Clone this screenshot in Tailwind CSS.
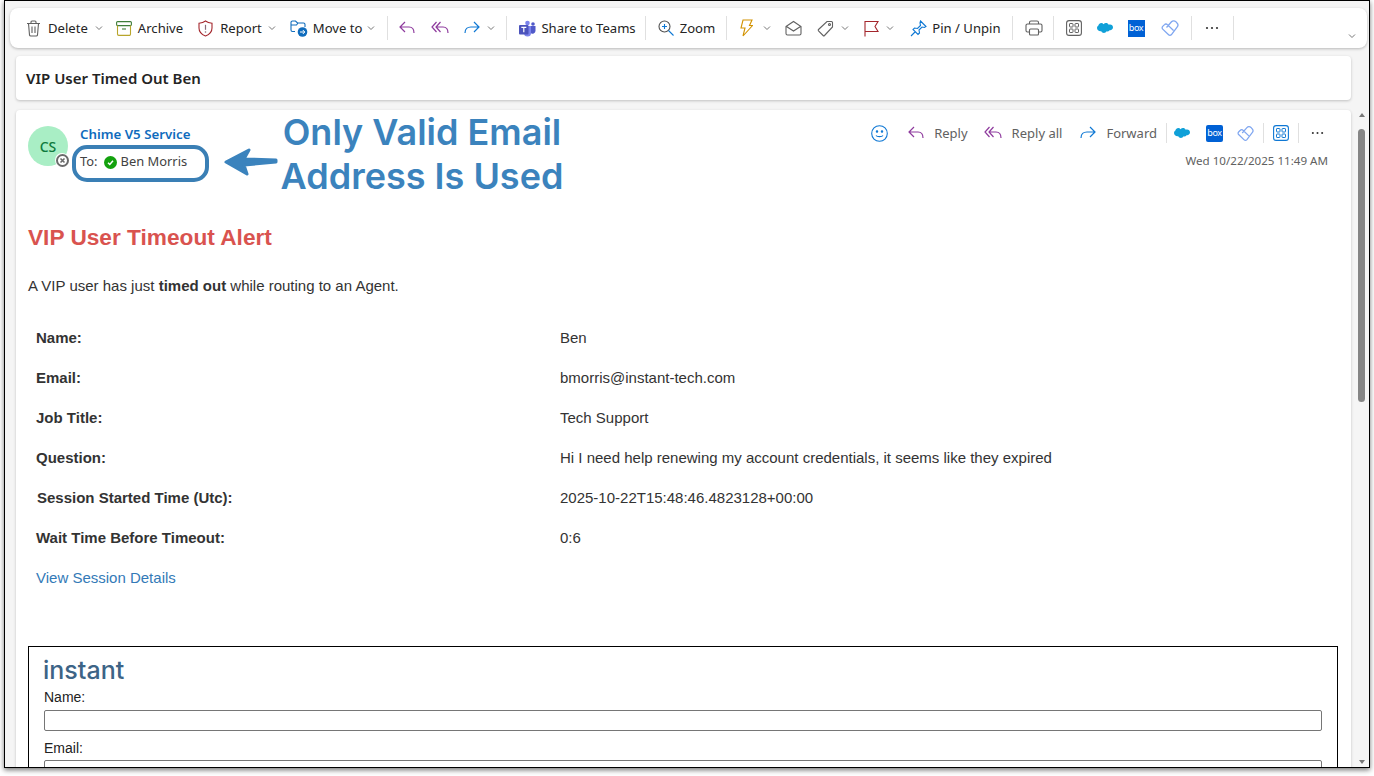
<!DOCTYPE html>
<html lang="en">
<head>
    <meta charset="UTF-8">
    <title>VIP User Timed Out Ben</title>
    <script src="https://cdn.jsdelivr.net/npm/@tailwindcss/browser@4"></script>
</head>
<body class="bg-white h-[776px] overflow-hidden font-['Noto_Sans',sans-serif]">
    <svg class="hidden">
        <symbol id="chev" viewBox="0 0 8 8"><path d="M1 2.5 4 5.5 7 2.5" fill="none" stroke="#777" stroke-width="1"/></symbol>
        <symbol id="reply" viewBox="0 0 18 16"><path d="M7 2 2 7l5 5M2 7h9c3 0 5 2 5 6" fill="none" stroke="currentColor" stroke-width="1.2"/></symbol>
        <symbol id="replyall" viewBox="0 0 18 16"><path d="M5.5 2 1 7l4.5 5M9.5 2 5 7l4.500 5M5 7h7c3 0 5 2 5 6" fill="none" stroke="currentColor" stroke-width="1.2"/></symbol>
        <symbol id="forward" viewBox="0 0 18 16"><path d="M11 2l5 5-5 5M16 7H8c-3.500 0-6 2-6 6" fill="none" stroke="currentColor" stroke-width="1.2"/></symbol>
        <symbol id="apps" viewBox="0 0 16 16"><rect x=".6" y=".6" width="14.8" height="14.8" rx="2.500" fill="none" stroke="currentColor" stroke-width="1.1"/><rect x="3.5" y="3.5" width="3.5" height="3.5" rx=".6" fill="none" stroke="currentColor"/><rect x="9" y="3.5" width="3.5" height="3.5" rx=".6" fill="none" stroke="currentColor"/><rect x="3.5" y="9" width="3.5" height="3.5" rx=".6" fill="none" stroke="currentColor"/><rect x="9" y="9" width="3.5" height="3.5" rx=".6" fill="none" stroke="currentColor"/></symbol>
        <symbol id="sf" viewBox="0 0 16 11"><path d="M6.600 1.700C7.200 1 8 .6 9 .6c1.200 0 2.200.7 2.700 1.600.5-.2 1-.3 1.400-.3 1.600 0 2.900 1.300 2.900 2.900S14.700 7.700 13.100 7.700h-.6c-.4.800-1.200 1.200-2 1.200-.4 0-.7-.1-1-.2C9 9.800 8 10.400 6.900 10.400c-1.200 0-2.200-.7-2.600-1.700-.2 0-.4.100-.6.100C1.500 8.800 0 7.400 0 5.600c0-1.200.6-2.100 1.400-2.600C1.700 1.500 3 .5 4.300.5c.9 0 1.700.5 2.300 1.200z" fill="#10a0d8"/></symbol>
        <symbol id="viva" viewBox="0 0 18 18"><path d="M5.500 8.500 10.500 2.800a3 3 0 0 1 4.300-.2l1.200 1.400a3 3 0 0 1 .1 4.100L10.300 15.800a1.900 1.900 0 0 1-2.700 0L1.700 10.100a1.900 1.900 0 0 1 0-2.700L3.500 5.600a2 2 0 0 1 2.900 0L12.500 11.500" fill="none" stroke="#7fa6f0" stroke-width="1.3"/></symbol>
        <symbol id="dots" viewBox="0 0 14 4"><circle cx="2" cy="2" r="1.1" fill="#333"/><circle cx="7" cy="2" r="1.1" fill="#333"/><circle cx="12" cy="2" r="1.1" fill="#333"/></symbol>
    </svg>

    <!-- Window frame -->
    <div class="relative ml-[4px] w-[1366px] h-[768px] border border-black bg-[#f5f5f5] overflow-hidden shadow-[0_2px_5px_rgba(0,0,0,0.55)]">

        <!-- Toolbar -->
        <div class="relative ml-[5px] mt-[7px] w-[1357px] h-[40px] bg-white rounded-[8px] shadow-[0_1px_3px_rgba(0,0,0,0.25)] flex items-center pl-[16px] text-[13.1px] text-[#242424]">
            <svg class="w-[15px] h-[17px]" viewBox="0 0 15 17" fill="none" stroke="#616161" stroke-width="1.1"><path d="M1 3.500h13M5 3.500V2a1 1 0 0 1 1-1h3a1 1 0 0 1 1 1v1.500M2.500 3.500l1 11.500a1.300 1.300 0 0 0 1.300 1h5.400a1.300 1.300 0 0 0 1.300-1l1-11.500M6 6.500v6.500M9 6.500v6.500"/></svg>
            <span class="ml-[7px] pt-[2px]">Delete</span>
            <svg class="w-[8px] h-[8px] ml-[7px]"><use href="#chev"/></svg>

            <svg class="w-[16px] h-[15px] ml-[13px]" viewBox="0 0 16 15" fill="none" stroke-width="1.1"><rect x=".6" y=".6" width="14.8" height="4" rx="1" stroke="#3f7d3a"/><path d="M1.500 4.600v8.500a1.300 1.300 0 0 0 1.300 1.300h10.400a1.300 1.300 0 0 0 1.300-1.300V4.600" stroke="#b8a52b"/><path d="M6 8h4" stroke="#3f7d3a"/></svg>
            <span class="ml-[6px] pt-[2px]">Archive</span>

            <svg class="w-[15px] h-[17px] ml-[15px]" viewBox="0 0 15 17" fill="none"><path d="M7.500 1c2 1.500 4 2 6.500 2.200V8c0 4-2.500 6.500-6.500 8C3.500 14.500 1 12 1 8V3.200C3.500 3 5.500 2.500 7.500 1z" stroke="#a4262c" stroke-width="1.1"/><path d="M7.500 4.800v5" stroke="#8a6d7a" stroke-width="1.2"/><circle cx="7.500" cy="12" r=".8" fill="#8a6d7a"/></svg>
            <span class="ml-[7px] pt-[2px]">Report</span>
            <svg class="w-[8px] h-[8px] ml-[6px]"><use href="#chev"/></svg>

            <svg class="w-[18px] h-[17px] ml-[14px]" viewBox="0 0 18 17" fill="none"><path d="M5 11.500H2.500A1.500 1.500 0 0 1 1 10V2.500A1.500 1.500 0 0 1 2.500 1h3l2 2h6A1.500 1.500 0 0 1 15 4.500V7M1 5h5.500l1.500-2" stroke="#0f6cbd" stroke-width="1.1"/><circle cx="12.500" cy="12" r="4.800" fill="#0f6cbd"/><path d="M10 12h4.500M12.800 10l2 2-2 2" stroke="#fff"/></svg>
            <span class="ml-[5px] pt-[2px]">Move to</span>
            <svg class="w-[8px] h-[8px] ml-[5px]"><use href="#chev"/></svg>
            <div class="w-px h-[24px] bg-[#e0e0e0] ml-[12px]"></div>

            <svg class="w-[18px] h-[16px] ml-[10px] text-[#8e3a9d]"><use href="#reply"/></svg>
            <svg class="w-[18px] h-[16px] ml-[15px] text-[#8e3a9d]"><use href="#replyall"/></svg>
            <svg class="w-[18px] h-[16px] ml-[14px] text-[#0f78d4]"><use href="#forward"/></svg>
            <svg class="w-[8px] h-[8px] ml-[6px]"><use href="#chev"/></svg>
            <div class="w-px h-[24px] bg-[#e0e0e0] ml-[11px]"></div>

            <svg class="w-[17px] h-[17px] ml-[12px]" viewBox="0 0 17 17"><circle cx="8.500" cy="3" r="2.300" fill="#7b83eb"/><circle cx="14" cy="4" r="1.800" fill="#5059c9"/><path d="M10 6h6.500v5a3 3 0 0 1-5 2z" fill="#5059c9"/><path d="M5 6h7v7a3.500 3.500 0 0 1-7 0z" fill="#7b83eb"/><rect x="0" y="5" width="9.500" height="9.500" rx="1" fill="#4b53bc"/><path d="M2.300 7.300h5M4.800 7.300v5" stroke="#fff" stroke-width="1.2"/></svg>
            <span class="ml-[5px] pt-[2px]">Share to Teams</span>
            <div class="w-px h-[24px] bg-[#e0e0e0] ml-[9px]"></div>

            <svg class="w-[16px] h-[16px] ml-[12px]" viewBox="0 0 16 16" fill="none" stroke="#505050" stroke-width="1.1"><circle cx="6.500" cy="6.500" r="5.500"/><path d="M10.500 10.500 15.500 15.500" stroke="#0f78d4"/><path d="M6.500 4v5M4 6.500h5" stroke="#0f78d4"/></svg>
            <span class="ml-[6px] pt-[2px]">Zoom</span>
            <div class="w-px h-[24px] bg-[#e0e0e0] ml-[11px]"></div>

            <svg class="w-[13px] h-[18px] ml-[13px]" viewBox="0 0 13 18" fill="none"><path d="M3 1h9L9.500 6.500H12.500L3 17l2-8H1z" stroke="#d29200" stroke-width="1.1"/></svg>
            <svg class="w-[8px] h-[8px] ml-[10px]"><use href="#chev"/></svg>

            <svg class="w-[17px] h-[16px] ml-[14px]" viewBox="0 0 17 16" fill="none" stroke="#616161" stroke-width="1.1"><path d="M1 6.500 8.500 1.500 16 6.500v7a1.500 1.500 0 0 1-1.500 1.500h-12A1.500 1.500 0 0 1 1 13.500zM1.500 6.500 8.500 11l7-4.500"/></svg>
            <svg class="w-[17px] h-[17px] ml-[15px]" viewBox="0 0 17 17" fill="none" stroke="#616161" stroke-width="1.1"><path d="M10 1.500h4.500a1 1 0 0 1 1 1V7L7.500 15.500a1 1 0 0 1-1.400 0L1.500 10.900a1 1 0 0 1 0-1.400z"/><circle cx="12.500" cy="4.500" r="1"/></svg>
            <svg class="w-[8px] h-[8px] ml-[7px]"><use href="#chev"/></svg>

            <svg class="w-[15px] h-[17px] ml-[15px]" viewBox="0 0 15 17" fill="none" stroke="#a4262c" stroke-width="1.1"><path d="M1 16.500V1.500h13l-3 5 3 5H1"/></svg>
            <svg class="w-[8px] h-[8px] ml-[7px]"><use href="#chev"/></svg>

            <svg class="w-[17px] h-[17px] ml-[16px]" viewBox="0 0 17 17" fill="none" stroke="#0f78d4" stroke-width="1.1"><path d="M10.500 1 16 6.500 14.500 7.500 12 7l-3 3 .5 3-1.500 1.500-5-5L4.500 8l3 .5 3-3L10 3zM5.500 11.500 1 16"/></svg>
            <span class="ml-[5px] pt-[2px]">Pin / Unpin</span>
            <div class="w-px h-[24px] bg-[#e0e0e0] ml-[11px]"></div>

            <svg class="w-[18px] h-[16px] ml-[12px]" viewBox="0 0 18 16" fill="none" stroke="#616161" stroke-width="1.1"><path d="M4.500 4V2.500A1.500 1.500 0 0 1 6 1h6a1.500 1.500 0 0 1 1.500 1.500V4"/><path d="M4.500 12H2.500A1.500 1.500 0 0 1 1 10.500V5.500A1.500 1.500 0 0 1 2.500 4h13A1.500 1.500 0 0 1 17 5.500v5a1.500 1.500 0 0 1-1.500 1.500h-2"/><rect x="4.500" y="9" width="9" height="6" rx="1"/></svg>
            <div class="w-px h-[24px] bg-[#e0e0e0] ml-[10px]"></div>

            <svg class="w-[16px] h-[16px] ml-[12px] text-[#616161]"><use href="#apps"/></svg>
            <svg class="w-[16px] h-[12px] ml-[15px]"><use href="#sf"/></svg>
            <div class="w-[17px] h-[17px] ml-[15px] bg-[#0061d5] text-white text-[9px] leading-[16px] text-center tracking-[-0.3px]">box</div>
            <svg class="w-[18px] h-[18px] ml-[16px]"><use href="#viva"/></svg>
            <div class="w-px h-[24px] bg-[#e0e0e0] ml-[12px]"></div>
            <svg class="w-[14px] h-[4px] ml-[13px]"><use href="#dots"/></svg>
            <div class="w-px h-[24px] bg-[#e0e0e0] ml-[14px]"></div>
            <svg class="absolute right-[11px] top-[24px] w-[8px] h-[8px]"><use href="#chev"/></svg>
        </div>

        <!-- Subject -->
        <div class="ml-[11px] mt-[8px] w-[1335px] h-[44px] bg-white rounded-[4px] shadow-[0_1px_3px_rgba(0,0,0,0.22)] flex items-center pl-[10px] text-[15px] font-semibold text-[#242424]">VIP User Timed Out Ben</div>

        <div class="flex mt-[10px]">
            <!-- Message -->
            <div class="relative ml-[11px] w-[1335px] h-[700px] bg-white rounded-t-[4px] shadow-[0_1px_3px_rgba(0,0,0,0.22)]">
                <!-- Header -->
                <div class="flex h-[85px]">
                    <div class="relative ml-[12px] mt-[16px] w-[40px] h-[40px] rounded-full bg-[#a9eec5] flex items-center justify-center text-[14px] font-medium text-[#0e7a3d]">
                        CS
                        <span class="absolute left-[27px] top-[27px] w-[14px] h-[14px] rounded-full bg-white flex items-center justify-center">
                            <svg class="w-[13px] h-[13px]" viewBox="0 0 13 13"><circle cx="6.500" cy="6.500" r="5.500" fill="none" stroke="#6b6b6b" stroke-width="2"/><path d="M4.500 4.500l4 4M8.500 4.500l-4 4" stroke="#6b6b6b" stroke-width="1.6"/></svg>
                        </span>
                    </div>
                    <div class="ml-[12px] mt-[15px]">
                        <div class="text-[13.3px] font-semibold leading-[18px] text-[#0f6cbd]">Chime V5 Service</div>
                        <div class="flex items-center mt-[10px] h-[18px] text-[12.9px] text-[#424242]">
                            To:
                            <span class="ml-[6px] w-[13px] h-[13px] rounded-full bg-[#13a10e] flex items-center justify-center">
                                <svg class="w-[9px] h-[9px]" viewBox="0 0 9 9"><path d="M2 4.700 3.800 6.500 7 2.800" fill="none" stroke="#fff" stroke-width="1.500"/></svg>
                            </span>
                            <span class="ml-[4px]">Ben Morris</span>
                        </div>
                    </div>

                    <div class="ml-auto mr-[23px] mt-[13px] flex flex-col items-end">
                        <div class="flex items-center h-[20px] mr-[4px] text-[13px] text-[#616161]">
                            <svg class="w-[17px] h-[17px] text-[#0f78d4]" viewBox="0 0 17 17" fill="none" stroke="currentColor" stroke-width="1.1"><circle cx="8.500" cy="8.500" r="7.800"/><path d="M5 10.500c1 1.500 6 1.500 7 0"/><circle cx="6" cy="6.500" r=".7" fill="currentColor"/><circle cx="11" cy="6.500" r=".7" fill="currentColor"/></svg>
                            <svg class="w-[18px] h-[16px] ml-[19px] text-[#8e3a9d]"><use href="#reply"/></svg>
                            <span class="ml-[9px] pt-[1px]">Reply</span>
                            <svg class="w-[18px] h-[16px] ml-[16px] text-[#8e3a9d]"><use href="#replyall"/></svg>
                            <span class="ml-[10px] pt-[1px]">Reply all</span>
                            <svg class="w-[18px] h-[16px] ml-[17px] text-[#0f78d4]"><use href="#forward"/></svg>
                            <span class="ml-[9px] pt-[1px]">Forward</span>
                            <div class="w-px h-[20px] bg-[#e0e0e0] ml-[9px]"></div>
                            <svg class="w-[16px] h-[12px] ml-[7px]"><use href="#sf"/></svg>
                            <div class="w-[17px] h-[17px] ml-[16px] rounded-[2px] bg-[#0061d5] text-white text-[9px] leading-[16px] text-center tracking-[-0.3px]">box</div>
                            <svg class="w-[17px] h-[17px] ml-[14px]"><use href="#viva"/></svg>
                            <div class="w-px h-[20px] bg-[#e0e0e0] ml-[9px]"></div>
                            <svg class="w-[16px] h-[16px] ml-[9px] text-[#0f78d4]"><use href="#apps"/></svg>
                            <div class="w-px h-[20px] bg-[#e0e0e0] ml-[9px]"></div>
                            <svg class="w-[13px] h-[4px] ml-[12px]"><use href="#dots"/></svg>
                        </div>
                        <div class="mt-[10px] text-[11.6px] leading-[16px] text-[#616161]">Wed 10/22/2025 11:49 AM</div>
                    </div>
                </div>

                <!-- Annotation over the header -->
                <div class="absolute left-[56px] top-[35px] w-[137px] h-[37px] rounded-[15px] border-[4px] border-[#3a7fb5]"></div>
                <svg class="absolute left-[207px] top-[36px] w-[56px] h-[32px]" viewBox="0 0 56 32" fill="#3b83bd" stroke="#3b83bd" stroke-width="3" stroke-linejoin="round"><path d="M3 16 26 4 21 13 53 14 53 16 21 19 24 28Z"/></svg>
                <div class="absolute left-[261px] top-[0px] w-[290px] text-center text-[36px] leading-[44px] font-semibold text-[#3b83bd] font-['Inter',sans-serif]">Only Valid Email<br>Address Is Used</div>

                <!-- Body -->
                <div class="font-['Liberation_Sans',sans-serif] text-[15px] text-[#333]">
                    <h1 class="ml-[12px] mt-[28px] text-[22.67px] leading-[28px] font-bold text-[#d9534f]">VIP User Timeout Alert</h1>
                    <p class="ml-[12px] mt-[26px] leading-[17px]">A VIP user has just <b>timed out</b> while routing to an Agent.</p>
                    <div class="ml-[20px] mt-[24px] grid grid-cols-[524px_1fr] auto-rows-[40px] items-center">
                        <b>Name:</b><span>Ben</span>
                        <b>Email:</b><span>bmorris@instant-tech.com</span>
                        <b>Job Title:</b><span>Tech Support</span>
                        <b>Question:</b><span>Hi I need help renewing my account credentials, it seems like they expired</span>
                        <b class="ml-px">Session Started Time (Utc):</b><span>2025-10-22T15:48:46.4823128+00:00</span>
                        <b>Wait Time Before Timeout:</b><span>0:6</span>
                        <span class="text-[#337ab7]">View Session Details</span>
                    </div>

                    <!-- Embedded form -->
                    <div class="ml-[12px] mt-[48px] w-[1310px] h-[200px] border border-black pl-[15px] pr-[15px] pt-[10px] text-[14px] text-[#222]">
                        <div class="text-[25px] leading-[27px] font-medium text-[#3d6486] font-['Inter',sans-serif] -ml-[1px]">instant</div>
                        <div class="mt-[5px] leading-[16px]">Name:</div>
                        <div class="mt-[5px] h-[21px] border border-[#767676] rounded-[2px]"></div>
                        <div class="mt-[9px] leading-[16px]">Email:</div>
                        <div class="mt-[4px] h-[21px] border border-[#767676] rounded-[2px]"></div>
                    </div>
                </div>
            </div>

            <!-- Scrollbar -->
            <div class="relative ml-[4px] -mt-[1px] w-[13px] h-[660px] flex flex-col items-center">
                <div class="mt-[4px] w-0 h-0 border-x-[3px] border-x-transparent border-b-[4px] border-b-[#777]"></div>
                <div class="mt-[12px] w-[7px] h-[273px] rounded-[4px] bg-[#858585]"></div>
                <div class="mt-auto mb-[5px] w-0 h-0 border-x-[3px] border-x-transparent border-t-[4px] border-t-[#777]"></div>
            </div>
        </div>
    </div>
</body>
</html>
